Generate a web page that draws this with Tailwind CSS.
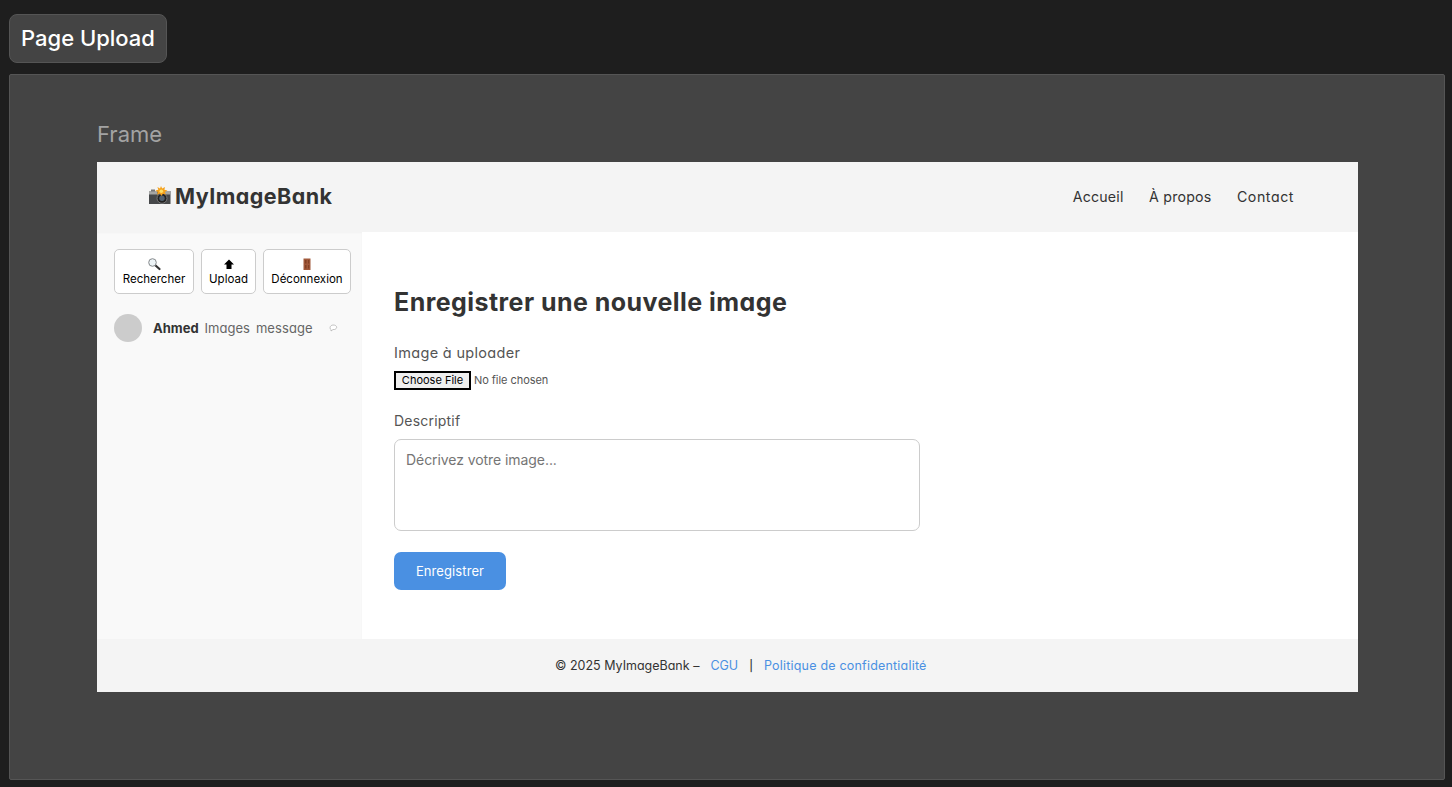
<!DOCTYPE html>
<html lang="fr">
<head>
<meta charset="utf-8">
<title>Page Upload</title>
<script src="https://cdn.jsdelivr.net/npm/@tailwindcss/browser@4"></script>
</head>
<body class="h-[787px] w-[1452px] overflow-hidden bg-[#1e1e1e] pt-[14px] pl-[9px] font-[Inter,sans-serif]">
<div class="flex h-[49px] w-[158px] items-center rounded-lg border border-[#555] bg-[#444] pl-[11px] text-[22px] font-medium text-white"><span class="whitespace-nowrap">Page Upload</span></div>
<section class="mt-[11px] h-[706px] w-[1436px] rounded-xs border border-[#555] bg-[#444] px-[87px] pt-[43px]">
<div class="flex h-[32px] items-center text-[22px] text-[#a3a3a3]">Frame</div>
<div class="mt-[12px] flex h-[530px] w-[1261px] flex-col bg-white text-[#333]">
<header class="flex h-[70px] items-center justify-between bg-[#f4f4f4] pr-[64px] pb-[2px] pl-[52px] [font-feature-settings:'cv11']">
<div class="flex items-center">
<svg class="mb-[1px] h-[20px] w-[22px]" viewBox="0 0 22 20"><path d="M0 5h21.500v13H0z" fill="#46484a"/><path d="M0 5h21.500v3.500H0z" fill="#a5a6a5"/><path d="M2 3.500h4v2H2z" fill="#777"/><path d="M8 4h8v5H8z" fill="#686a6b"/><circle cx="13" cy="12.300" r="5" fill="#222" stroke="#777" stroke-width="1"/><circle cx="13" cy="12.300" r="2.700" fill="#526171"/><path d="m12 0 1.200 2.600L16 1l-.6 2.800 3.100.7-2.700 1.500L17 8.500l-3-.8L12.200 10l-1.300-2.400L8 8.700l.8-2.800-2.400-1.300 2.900-.8L8.400 1l2.600 1.500z" fill="#f5a21d"/><circle cx="12.300" cy="5.200" r="1.800" fill="#ffdf65"/></svg>
<span class="ml-[4px] text-[21.500px] font-bold tracking-[0.450px]">MyImageBank</span>
</div>
<nav class="flex gap-[25.500px] pt-[2px] text-[14.200px]"><a class="tracking-[0.200px]">Accueil</a><a class="tracking-[0.200px]">À propos</a><a class="tracking-[0.550px]">Contact</a></nav>
</header>
<div class="flex h-[407px]">
<aside class="w-[265px] bg-[#f9f9f9] pt-[17px] pl-[17px] shadow-[inset_0_1px_2px_rgba(0,0,0,0.03)]">
<div class="flex gap-[7px] text-[11.500px] leading-[15px] text-black">
<button class="flex h-[45px] w-[80px] flex-col items-center justify-center rounded-[5px] border border-[#ccc] bg-white"><svg class="h-[14px] w-[14px]" viewBox="0 0 14 14"><path d="m8 8 4.500 4" stroke="#333" stroke-width="2.200" stroke-linecap="round"/><circle cx="5.500" cy="5.500" r="3.800" fill="#edf4f7" stroke="#85898c"/></svg><span class="-mb-[1px] pt-[1px]">Rechercher</span></button>
<button class="flex h-[45px] w-[55px] flex-col items-center justify-center rounded-[5px] border border-[#ccc] bg-white"><svg class="h-[14px] w-[14px]" viewBox="0 0 14 14"><path d="m7 2.500 5 5H9.500V12h-5V7.500H2z"/></svg><span class="-mb-[1px] pt-[1px]">Upload</span></button>
<button class="flex h-[45px] w-[88px] flex-col items-center justify-center rounded-[5px] border border-[#ccc] bg-white"><svg class="h-[14px] w-[14px]" viewBox="0 0 14 14"><path d="M3.500 1.500h7V13h-7z" fill="#a0583a"/><path d="M5 3h1.500v3.500H5zM8 3h1.200v3.500H8zM5 8h1.500v3.500H5zM8 8h1.200v3.500H8z" fill="#824025"/></svg><span class="-mb-[1px] pt-[1px]">Déconnexion</span></button>
</div>
<div class="mt-[20px] flex h-[28px] items-center text-[13px] text-[#666] [font-feature-settings:'cv11']"><span class="mr-[11px] h-[28px] w-[28px] rounded-full bg-[#ccc]"></span><span class="mr-[6px] pt-[2px] font-bold text-[#333]">Ahmed</span><span class="mr-[6px] pt-[2px]">Images</span><span class="mr-[16px] pt-[2px] tracking-[0.100px]">message</span><svg class="h-[8px] w-[9px]" viewBox="0 0 9 8"><path d="M2 5.500C.2 4.500 1 1.200 4 1c4-.2 5 3.500 1.500 4.500H4L2 7z" fill="#fff" stroke="#aaa" stroke-width=".7"/></svg></div>
</aside>
<main class="pt-[51px] pl-[32px]">
<h1 class="h-[38px] text-[25px] leading-[39px] font-bold tracking-[0.450px] [font-feature-settings:'cv11']">Enregistrer une nouvelle image</h1>
<div class="mt-[22px] h-[20px] text-[14.500px] leading-[20px] tracking-[0.320px] text-[#555] [font-feature-settings:'cv11']">Image à uploader</div>
<div class="mt-[8px] flex h-[19px] items-center text-[11px] text-[#555]"><button class="mr-[3px] h-[19px] w-[77px] border-2 border-black bg-[#efefef] leading-[15px] text-black">Choose File</button><span class="tracking-[-0.050px]">No file chosen</span></div>
<div class="mt-[21px] h-[20px] text-[14px] leading-[20px] tracking-[0.200px] text-[#555]">Descriptif</div>
<div class="mt-[8px] h-[92px] w-[526px] rounded-[7px] border border-[#ccc] px-[11px] pt-[10px] text-[14px] leading-[20px] tracking-[-0.070px] text-[#757575]">Décrivez votre image...</div>
<button class="mt-[21px] h-[38px] w-[112px] rounded-[7px] bg-[#4a90e2] pt-[2px] text-[13px] tracking-[0.100px] text-white">Enregistrer</button>
</main>
</div>
<footer class="flex h-[53px] items-center bg-[#f4f4f4] pt-[1px] pl-[458px] text-[12.500px] [font-feature-settings:'cv11']"><span>© 2025 MyImageBank –</span><a class="ml-[11px] text-[#4a90e2]">CGU</a><span class="ml-[11px] text-[11px] font-medium">|</span><a class="ml-[11px] tracking-[0.200px] text-[#4a90e2]">Politique de confidentialité</a></footer>
</div>
</section>
</body>
</html>
